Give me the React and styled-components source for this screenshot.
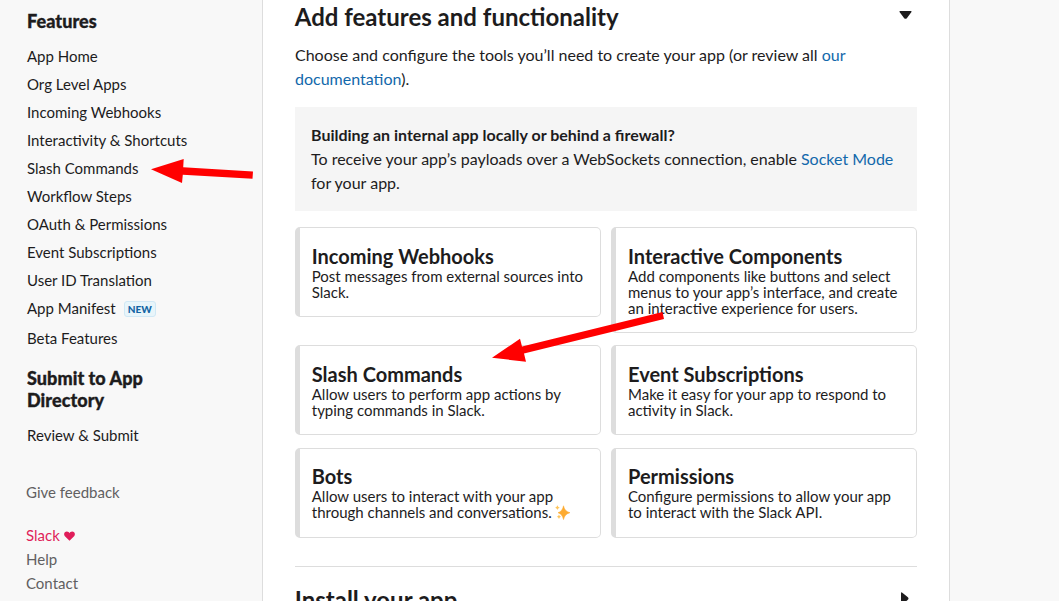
import React from "react";
import styled, { createGlobalStyle } from "styled-components";

const GlobalStyle = createGlobalStyle`
  * { box-sizing: border-box; }
  html, body { margin: 0; padding: 0; overflow: hidden; }
  body {
    background: #f8f8f8;
    color: #1d1c1d;
    font-family: Lato, "Liberation Sans", sans-serif;
    font-size: 16px;
    line-height: 24px;
  }
`;

const Page = styled.div`
  position: relative;
  display: flex;
  width: 1059px;
  height: 601px;
  overflow: hidden;
`;

const Sidebar = styled.nav`
  width: 262px;
  flex: none;
  padding: 10px 60px 0 27px;
  font-size: 15px;
`;

const NavHeading = styled.h4`
  margin: ${(p) => p.$margin || "0"};
  font-size: 18px;
  font-weight: 900;
  letter-spacing: 0.06px;
  line-height: 22px;
  -webkit-text-stroke: 0.35px currentColor;
`;

const NavList = styled.ul`
  margin: 0;
  padding: 0;
  list-style: none;
`;

const NavItem = styled.li`
  display: flex;
  height: ${(p) => (p.$tall ? 30 : 28)}px;
  line-height: 28px;
  white-space: nowrap;
`;

const Badge = styled.span`
  height: 16px;
  margin: 7px 0 0 8px;
  padding: 0 3px;
  border: 1px solid #d0e8f5;
  border-radius: 3px;
  background: #e8f5fa;
  color: #1264a3;
  font-size: 10px;
  font-weight: 900;
  line-height: 15px;
`;

const FooterLinks = styled.div`
  display: flex;
  flex-direction: column;
  margin: 31px 0 0 -1px;
  color: #616061;
`;

const FooterLink = styled.a`
  display: flex;
  align-items: center;
  gap: 4px;
  margin-bottom: ${(p) => (p.$spaced ? 19 : 0)}px;
  color: ${(p) => (p.$brand ? "#e01e5a" : "inherit")};
  line-height: 24px;
`;

const HeartIcon = styled.svg`
  margin-top: 2px;
`;

const Main = styled.main`
  width: 688px;
  flex: none;
  padding: 1px 32px 0 32px;
  border: solid #dddddd;
  border-width: 0 1px;
  background: #fff;
`;

const SectionHeader = styled.div`
  display: flex;
  justify-content: space-between;
`;

const SectionTitle = styled.h2`
  margin: 0 0 0 -0.25px;
  font-size: 24px;
  font-weight: 700;
  line-height: 32px;
  white-space: nowrap;
`;

const Intro = styled.p`
  margin: 10px 0 16px;
`;

const Link = styled.a`
  color: #1268ab;
`;

const Callout = styled.div`
  height: 104px;
  margin-bottom: 16px;
  padding: 16px;
  background: #f5f5f5;
`;

const CardRow = styled.div`
  display: flex;
  align-items: flex-start;
  gap: 10px;
  margin-bottom: ${(p) => p.$gap}px;
`;

const CardBox = styled.div`
  width: 306px;
  flex: none;
  padding: ${(p) => (p.$raised ? "15px 14px 17px 12px" : "16px 14px 16px 12px")};
  border: 1px solid #dddddd;
  border-left-width: 5px;
  border-radius: 5px;

  &:first-child {
    padding-left: 11.75px;
  }
`;

const CardTitle = styled.h3`
  margin: 0;
  font-size: 20px;
  font-weight: 700;
  line-height: 24px;
`;

const CardText = styled.p`
  margin: 0;
  font-size: 15px;
  line-height: 16px;
  white-space: nowrap;
`;

const Divider = styled.hr`
  height: 1px;
  margin: 0 0 17px;
  border: 0;
  background: #dddddd;
`;

const Caret = styled.svg`
  flex: none;
  margin: ${(p) => p.$margin};
`;

const SparkleIcon = styled.svg`
  margin: -1px 0 -3px -0.5px;
  vertical-align: top;
`;

const Annotations = styled.svg`
  position: absolute;
  inset: 0;
  pointer-events: none;
`;

const Sparkles = () => (
  <SparkleIcon width="16" height="18" viewBox="0 0 16 18">
    <path d="M8.500 2.800 Q9.700 8.500 15 9.700 Q9.700 10.900 8.500 16.600 Q7.300 10.900 3 9.700 Q7.300 8.500 8.500 2.800Z" fill="#fdab31" stroke="#fdab31" strokeWidth=".5" />
    <path d="M2.400 2.300 Q2.800 4.200 4.700 4.700 Q2.800 5.200 2.400 7.100 Q2 5.200 .2 4.700 Q2 4.200 2.400 2.300Z" fill="#fdc55d" />
    <path d="M4 11.600 Q4.400 13.300 6.100 13.800 Q4.400 14.300 4 16 Q3.500 14.300 1.800 13.800 Q3.500 13.300 4 11.600Z" fill="#fdc55d" />
  </SparkleIcon>
);

const Card = ({ title, lines, sparkle, raised }) => (
  <CardBox $raised={raised}>
    <CardTitle>{title}</CardTitle>
    {lines.map((line, i) => (
      <CardText key={line}>
        {line}
        {sparkle && i === lines.length - 1 && <> <Sparkles /></>}
      </CardText>
    ))}
  </CardBox>
);

const features = [
  "App Home",
  "Org Level Apps",
  "Incoming Webhooks",
  "Interactivity & Shortcuts",
  "Slash Commands",
  "Workflow Steps",
  "OAuth & Permissions",
  "Event Subscriptions",
  "User ID Translation",
];

export default function App() {
  return (
    <>
      <GlobalStyle />
      <Page>
        <Sidebar>
          <NavHeading $margin="0 0 10px">Features</NavHeading>
          <NavList>
            {features.map((name) => (
              <NavItem key={name}>{name}</NavItem>
            ))}
            <NavItem $tall>
              App Manifest <Badge>NEW</Badge>
            </NavItem>
            <NavItem>Beta Features</NavItem>
          </NavList>
          <NavHeading $margin="15px 0 10px">
            Submit to App
            <br />
            Directory
          </NavHeading>
          <NavList>
            <NavItem>Review &amp; Submit</NavItem>
          </NavList>
          <FooterLinks>
            <FooterLink $spaced>Give feedback</FooterLink>
            <FooterLink $brand>
              Slack
              <HeartIcon width="11" height="10" viewBox="0 0 11 10">
                <path d="M5.500 9.700 L.9 5.300 C-.9 2.900 .7 .5 2.800 .5 C4.200 .5 5.100 1.300 5.500 2.200 C5.900 1.300 6.800 .5 8.200 .5 C10.300 .5 11.900 2.900 10.100 5.300Z" fill="#e01e5a" />
              </HeartIcon>
            </FooterLink>
            <FooterLink>Help</FooterLink>
            <FooterLink>Contact</FooterLink>
          </FooterLinks>
        </Sidebar>
        <Main>
          <SectionHeader>
            <SectionTitle>Add features and functionality</SectionTitle>
            <Caret $margin="9px 5px 0 0" width="13" height="10" viewBox="0 0 13 10">
              <path d="M1.200 1 H11.800 Q13.300 1 12.300 2.300 L8 7.900 Q6.500 9.700 5 7.900 L.7 2.300 Q-.3 1 1.200 1Z" fill="#1d1c1d" />
            </Caret>
          </SectionHeader>
          <Intro>
            Choose and configure the tools you’ll need to create your app (or review all{" "}
            <Link>
              our
              <br />
              documentation
            </Link>
            ).
          </Intro>
          <Callout>
            <strong>Building an internal app locally or behind a firewall?</strong>
            <br />
            To receive your app’s payloads over a WebSockets connection, enable <Link>Socket Mode</Link>
            <br />
            for your app.
          </Callout>
          <CardRow $gap={12}>
            <Card title="Incoming Webhooks" lines={["Post messages from external sources into", "Slack."]} />
            <Card
              title="Interactive Components"
              lines={[
                "Add components like buttons and select",
                "menus to your app’s interface, and create",
                "an interactive experience for users.",
              ]}
            />
          </CardRow>
          <CardRow $gap={13}>
            <Card title="Slash Commands" lines={["Allow users to perform app actions by", "typing commands in Slack."]} />
            <Card title="Event Subscriptions" lines={["Make it easy for your app to respond to", "activity in Slack."]} />
          </CardRow>
          <CardRow $gap={28}>
            <Card raised sparkle title="Bots" lines={["Allow users to interact with your app", "through channels and conversations."]} />
            <Card raised title="Permissions" lines={["Configure permissions to allow your app", "to interact with the Slack API."]} />
          </CardRow>
          <Divider />
          <SectionHeader>
            <SectionTitle>Install your app</SectionTitle>
            <Caret $margin="8px 8px 0 0" width="9" height="13" viewBox="0 0 9 13">
              <path d="M1 1.200 Q1 -.3 2.300 .7 L7.600 5 Q9.400 6.500 7.600 8 L2.300 12.300 Q1 13.300 1 11.800Z" fill="#1d1c1d" />
            </Caret>
          </SectionHeader>
        </Main>
        <Annotations width="1059" height="601" viewBox="0 0 1059 601">
          <g fill="#ff0000">
            <path d="M151 169.300 L183.700 159 L183.200 167.300 L253 171.500 L252.500 178.700 L182.800 174.700 L182 183Z" />
            <path d="M492 357.800 L520 338.700 L522 346.500 L662.500 312 L664 319 L524 353.500 L526 361.700Z" />
          </g>
        </Annotations>
      </Page>
    </>
  );
}
